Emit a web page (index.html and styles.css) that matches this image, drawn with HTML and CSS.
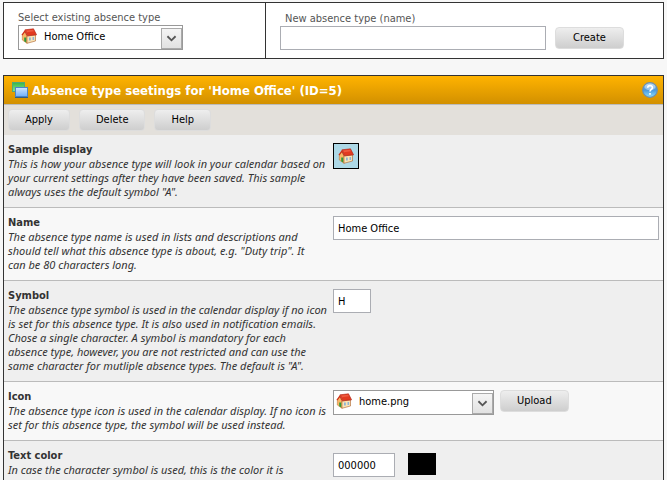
FILE: index.html
```
<!DOCTYPE html>
<html lang="en">
<head>
<meta charset="utf-8">
<title>Absence types</title>
<link rel="stylesheet" href="styles.css">
</head>
<body>
<svg class="defs" aria-hidden="true">
  <defs>
    <linearGradient id="gWin" x1="0" y1="0" x2="0" y2="1"><stop offset="0" stop-color="#cfe6ff"/><stop offset="1" stop-color="#6fb0fb"/></linearGradient>
    <linearGradient id="gGreen" x1="0" y1="0" x2="0" y2="1"><stop offset="0" stop-color="#35b548"/><stop offset="1" stop-color="#8be88a"/></linearGradient>
    <linearGradient id="gHelp" x1="0" y1="0" x2="0" y2="1"><stop offset="0" stop-color="#8fc0ea"/><stop offset=".5" stop-color="#4a98dc"/><stop offset="1" stop-color="#8be0fb"/></linearGradient>
    <symbol id="home" viewBox="0 0 16 16">
      <path d="M1.300 6.500v5.500L6 15.300V8L3.800 4z" fill="#f8b866" stroke="#b8702f" stroke-width=".5"/>
      <path d="M6 8v7.300l8.500-2.300V7z" fill="#fbe3b4" stroke="#a9602a" stroke-width=".6"/>
      <path d="M3.200 9.500h2v5L3.200 13.200z" fill="#2f9a3a"/>
      <path d="M8 9.500h1.800v3H8zM11.500 9h1.600v3h-1.600z" fill="#8fb4d4"/>
      <path d="M4 1.800 12.500.8 15.600 6.800 6.800 7.800z" fill="#e23a20" stroke="#b02414" stroke-width=".6"/>
      <path d="M4 1.800.5 6.800 1.500 7.500 3.900 4.200 6 8.200 6.800 7.800z" fill="#cf3018"/>
      <path d="M5 2.500 12 1.700l1 1.600-7 .9z" fill="#ee5a40"/>
    </symbol>
  </defs>
</svg>

<section class="picker">
  <form class="pick-existing">
    <label for="existing">Select existing absence type</label>
    <div class="icon-select wide">
      <svg class="home"><use href="#home"/></svg>
      <select id="existing"><option>Home Office</option></select>
      <svg class="arrow" viewBox="0 0 21 21"><path d="M6 8l4.500 4.500L15 8" fill="none" stroke="#555" stroke-width="2"/></svg>
    </div>
  </form>
  <form class="pick-new">
    <label for="newname">New absence type (name)</label>
    <div class="line">
      <input id="newname" type="text">
      <button type="button">Create</button>
    </div>
  </form>
</section>

<main class="panel">
  <header class="title">
    <svg class="windows" viewBox="0 0 16 16" aria-hidden="true">
      <rect x=".5" y=".5" width="12" height="9" fill="url(#gGreen)" stroke="#4fa878"/>
      <rect x="3.500" y="5.500" width="12" height="9" fill="url(#gWin)" stroke="#4a86c8"/>
      <path d="M3 15.500h13" stroke="#345f80"/>
    </svg>
    <h1>Absence type seetings for 'Home Office' (ID=5)</h1>
    <a href="#help" aria-label="Help"><svg viewBox="0 0 16 16">
      <circle cx="8" cy="8" r="7.300" fill="url(#gHelp)" stroke="#6c8fae" stroke-width="1.200"/>
      <ellipse cx="8" cy="4.800" rx="5.500" ry="3.300" fill="#fff" opacity=".4"/>
      <path d="M5.700 5.800C5.800 3 10.500 3 10.400 5.700 10.300 7.400 8 7.400 8 9.600M8 11v1.800" fill="none" stroke="#fff" stroke-width="1.700"/>
    </svg></a>
  </header>
  <div class="toolbar">
    <button type="button">Apply</button>
    <button type="button">Delete</button>
    <button type="button">Help</button>
  </div>

  <div class="row">
    <div class="info">
      <h2>Sample display</h2>
      <p>This is how your absence type will look in your calendar based on<br>your current settings after they have been saved. This sample<br>always uses the default symbol "A".</p>
    </div>
    <div class="field"><div class="sample"><svg class="home"><use href="#home"/></svg></div></div>
  </div>
  <div class="row alt">
    <div class="info">
      <h2><label for="name">Name</label></h2>
      <p>The absence type name is used in lists and descriptions and<br>should tell what this absence type is about, e.g. "Duty trip". It<br>can be 80 characters long.</p>
    </div>
    <div class="field"><input id="name" class="full" type="text" value="Home Office"></div>
  </div>
  <div class="row">
    <div class="info">
      <h2><label for="symbol">Symbol</label></h2>
      <p>The absence type symbol is used in the calendar display if no icon<br>is set for this absence type. It is also used in notification emails.<br>Chose a single character. A symbol is mandatory for each<br>absence type, however, you are not restricted and can use the<br>same character for mutliple absence types. The default is "A".</p>
    </div>
    <div class="field"><input id="symbol" class="char" type="text" value="H"></div>
  </div>
  <div class="row alt">
    <div class="info">
      <h2><label for="icon">Icon</label></h2>
      <p>The absence type icon is used in the calendar display. If no icon is<br>set for this absence type, the symbol will be used instead.</p>
    </div>
    <div class="field">
      <div class="icon-select">
        <svg class="home"><use href="#home"/></svg>
        <select id="icon"><option>home.png</option></select>
        <svg class="arrow" viewBox="0 0 21 21"><path d="M6 8l4.500 4.500L15 8" fill="none" stroke="#555" stroke-width="2"/></svg>
      </div>
      <button type="button">Upload</button>
    </div>
  </div>
  <div class="row">
    <div class="info">
      <h2><label for="color">Text color</label></h2>
      <p>In case the character symbol is used, this is the color it is<br>displayed in. Click in the field to open the color picker.</p>
    </div>
    <div class="field color"><input id="color" class="hex" type="text" value="000000"><span class="swatch"></span></div>
  </div>
</main>
</body>
</html>
```
FILE: styles.css
```
* { box-sizing: border-box; }
html { overflow: hidden; }
body {
  margin: 0;
  padding: 2px 3px 0;
  background: #f7f7f7;
  color: #333;
  font: 11px/14px Tahoma, "DejaVu Sans Condensed", sans-serif;
}
h1, h2, p { margin: 0; }
svg { display: block; }
.defs { position: absolute; width: 0; height: 0; }
.home { width: 16px; height: 16px; }

button, input, select { font: inherit; color: #000; }
button {
  height: 22px;
  padding: 0 16px;
  border: 1px solid #ddd;
  border-radius: 4px;
  background: linear-gradient(#eee, #cecece);
}
input {
  height: 24px;
  padding: 0 4px;
  border: 1px solid #abadb3;
  background: #fff;
}

.picker {
  display: flex;
  height: 57px;
  border: 1px solid #333;
  background: #fff;
}
.picker label { display: block; color: #555; }
.pick-existing {
  width: 262px;
  padding: 8px 14px;
  border-right: 1px solid #333;
}
.pick-new { flex: 1; padding: 9px 14px; }
.pick-new label { padding-left: 5px; }
.line { display: flex; gap: 9px; align-items: center; }
.line input { width: 266px; }
.line button { padding: 0 17px; }

.icon-select { position: relative; width: 161px; }
.icon-select.wide { width: 165px; }
.icon-select select {
  appearance: none;
  display: block;
  width: 100%;
  height: 25px;
  padding: 0 24px 2px 25px;
  border: 1px solid #999;
  border-radius: 0;
  background: #fff;
}
.icon-select .home { position: absolute; left: 3px; top: 3px; }
.arrow {
  position: absolute;
  right: 1px;
  top: 3px;
  width: 21px;
  height: 21px;
  border: 1px solid #aaa;
  background: linear-gradient(#f4f4f4, #e2e2e2);
  pointer-events: none;
}

.panel { margin-top: 16px; border: 1px solid #333; }
.title {
  display: flex;
  align-items: center;
  gap: 4px;
  height: 29px;
  padding: 0 5px 0 8px;
  border-bottom: 1px solid #bbb;
  background: linear-gradient(#ffb300, #d29000);
}
.title h1 { flex: 1; padding-top: 2px; color: #fff; font-size: 13px; line-height: 16px; }
.title svg { width: 16px; height: 16px; }
.toolbar {
  display: flex;
  gap: 9px;
  height: 30px;
  padding: 4px;
  background: #e3e0db;
}
.row {
  display: flex;
  gap: 5px;
  padding: 8px 4px;
  border-bottom: 1px solid #bbb;
  background: #efefef;
}
.row.alt { background: #f8f8f8; }
.info { width: 320px; flex: none; }
.info h2 { font-size: 11px; line-height: 14px; }
.info p {
  font-family: Tahoma, "Noto Sans", sans-serif;
  font-style: italic;
  white-space: nowrap;
}
.field { display: flex; flex: 1; align-items: flex-start; gap: 6px; }
.field.color { padding-top: 4px; }
.sample {
  padding: 4px;
  border: 1px solid #000;
  background: #add8e6;
}
.full { width: 100%; }
.char { width: 38px; }
.hex { width: 62px; }
.swatch { width: 28px; height: 22px; margin-left: 7px; background: #000; }
```
